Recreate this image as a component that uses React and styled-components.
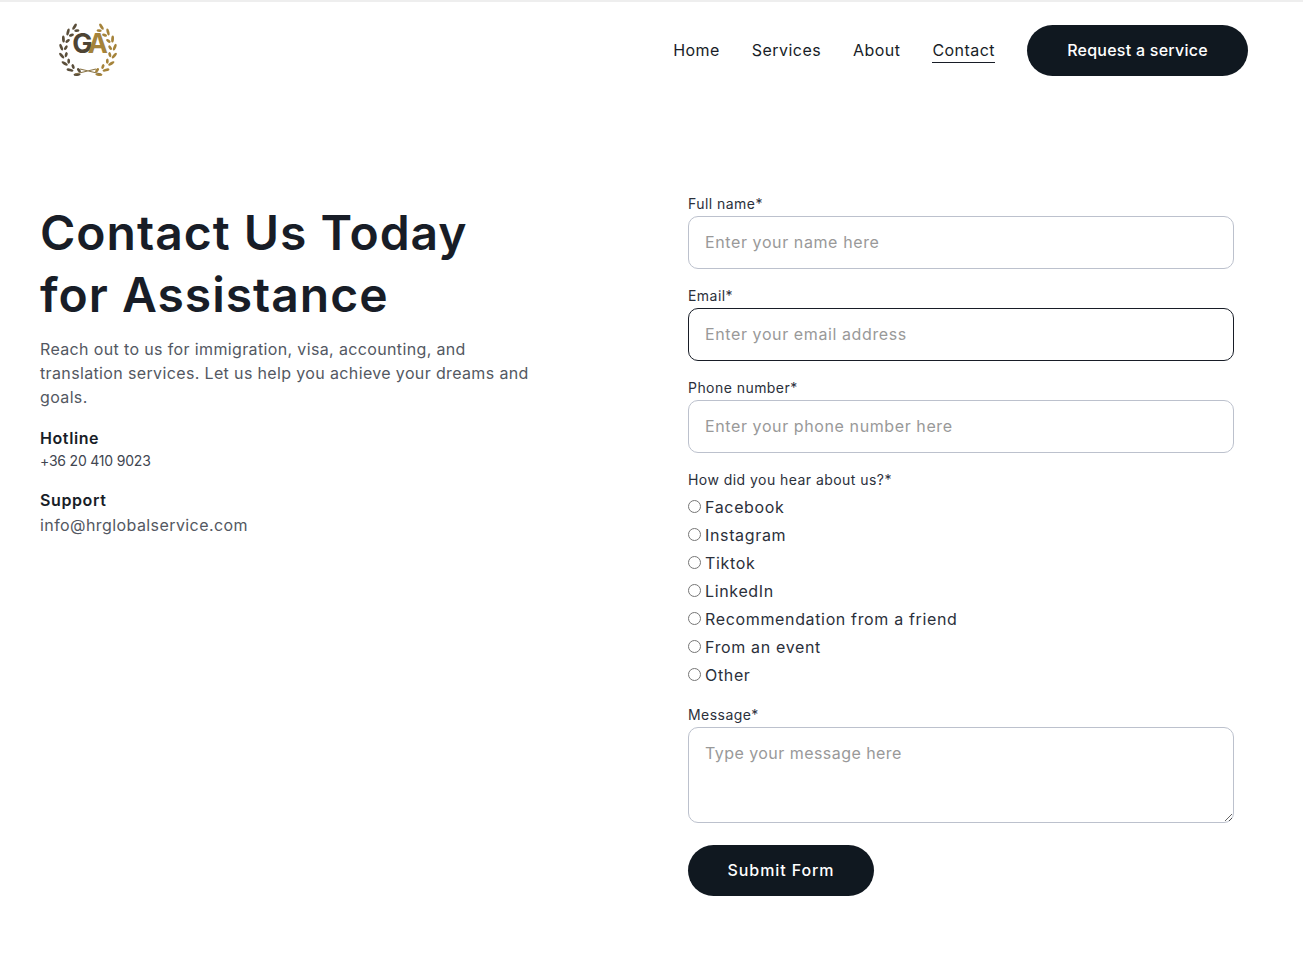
import React from 'react'
import styled, { createGlobalStyle } from 'styled-components'

const FONT = `Inter, "Open Sans", "Liberation Sans", sans-serif`

const GlobalStyle = createGlobalStyle`
  html, body {
    margin: 0;
    padding: 0;
    background: #fff;
    font-family: ${FONT};
  }
  * { box-sizing: border-box; }
`

const navLinks = ['Home', 'Services', 'About', 'Contact']
const sources = ['Facebook', 'Instagram', 'Tiktok', 'LinkedIn', 'Recommendation from a friend', 'From an event', 'Other']

// pairs of leaves along the left wreath branch, from the stem at the bottom up to the tip
const leaves = []
for (let i = 0; i < 8; i++) {
  const a = (114 + i * 18) * (Math.PI / 180)
  const x = 30 + 24.5 * Math.cos(a)
  const y = 27 + 24.5 * Math.sin(a)
  const tangent = (a * 180) / Math.PI
  leaves.push({ x: x + 2.4 * Math.cos(a), y: y + 2.4 * Math.sin(a), r: tangent - 28, ry: 3.5 })
  leaves.push({ x: x - 2.2 * Math.cos(a), y: y - 2.2 * Math.sin(a), r: tangent + 28, ry: 2.6 })
}

const Branch = ({ color }) => (
  <g fill={color}>
    {leaves.map((l, i) => (
      <ellipse key={i} cx={l.x} cy={l.y} rx="1.4" ry={l.ry} transform={`rotate(${l.r} ${l.x} ${l.y})`} />
    ))}
  </g>
)

const Logo = () => (
  <svg width="60" height="54" viewBox="0 0 60 54">
    <Branch color="#5a4e3a" />
    <g transform="translate(60 0) scale(-1 1)">
      <Branch color="#a5833a" />
    </g>
    <path d="M22 46 L43 51 M38 46 L17 51" stroke="#8a7548" strokeWidth="1.1" fill="none" />
    <text x="30" y="30" textAnchor="middle" fontFamily="Inter, sans-serif" fontWeight="700" fontSize="27" letterSpacing="-4">
      <tspan fill="#4e4434">G</tspan>
      <tspan fill="#a5833a">A</tspan>
    </text>
  </svg>
)

export default function App() {
  return (
    <Page>
      <GlobalStyle />
      <Header>
        <LogoBox><Logo /></LogoBox>
        <Nav>
          {navLinks.map((link) => (
            <NavLink key={link} href="#" $active={link === 'Contact'}>{link}</NavLink>
          ))}
          <PillButton $wide>Request a service</PillButton>
        </Nav>
      </Header>
      <Main>
        <Intro>
          <Title>Contact Us Today<br />for Assistance</Title>
          <Lead>Reach out to us for immigration, visa, accounting, and translation services. Let us help you achieve your dreams and goals.</Lead>
          <ContactTitle>Hotline</ContactTitle>
          <Phone>+36 20 410 9023</Phone>
          <ContactTitle $support>Support</ContactTitle>
          <Mail>info@hrglobalservice.com</Mail>
        </Intro>
        <Form onSubmit={(e) => e.preventDefault()}>
          <FieldLabel>Full name*</FieldLabel>
          <TextInput placeholder="Enter your name here" />
          <FieldLabel>Email*</FieldLabel>
          <TextInput $focused placeholder="Enter your email address" />
          <FieldLabel>Phone number*</FieldLabel>
          <TextInput placeholder="Enter your phone number here" />
          <FieldLabel>How did you hear about us?*</FieldLabel>
          <RadioList>
            {sources.map((s) => (
              <RadioRow key={s}>
                <Radio type="radio" name="source" />
                {s}
              </RadioRow>
            ))}
          </RadioList>
          <FieldLabel>Message*</FieldLabel>
          <MessageInput placeholder="Type your message here" />
          <PillButton type="submit">Submit Form</PillButton>
        </Form>
      </Main>
    </Page>
  )
}

const Page = styled.div`
  min-height: 955px;
  border-top: 2px solid #eeeeee;
  color: #181d27;
`

const Header = styled.header`
  display: flex;
  justify-content: space-between;
  align-items: center;
  height: 96px;
  padding: 0 55px 0 58px;
`

const LogoBox = styled.div`
  display: flex;
`

const Nav = styled.nav`
  display: flex;
  align-items: center;
  gap: 32px;
`

const NavLink = styled.a`
  font-size: 16px;
  line-height: 24px;
  letter-spacing: 0.45px;
  color: #181d27;
  text-decoration: none;
  border-bottom: 1px solid ${(p) => (p.$active ? '#181d27' : 'transparent')};
`

const PillButton = styled.button`
  display: block;
  width: ${(p) => (p.$wide ? '221px' : '186px')};
  height: 51px;
  border: none;
  border-radius: 26px;
  background: #101820;
  color: #fff;
  font-family: ${FONT};
  font-size: 16px;
  font-weight: 500;
  letter-spacing: ${(p) => (p.$wide ? '0.25px' : '0.9px')};
  padding: ${(p) => (p.$wide ? '0' : '0 0 1px')};
`

const Main = styled.main`
  display: grid;
  grid-template-columns: 648px 546px;
  padding: 96px 0 0 40px;
`

const Intro = styled.section`
  padding-top: 8px;
`

const Title = styled.h1`
  margin: 0;
  font-size: 48px;
  line-height: 62px;
  font-weight: 600;
  letter-spacing: 1px;
  color: #181d27;
`

const Lead = styled.p`
  width: 500px;
  margin: 11px 0 0;
  font-size: 16px;
  line-height: 24px;
  letter-spacing: 0.36px;
  color: #535862;
`

const ContactTitle = styled.h3`
  margin: ${(p) => (p.$support ? '16px' : '17px')} 0 0;
  font-size: 16px;
  line-height: 24px;
  font-weight: 600;
  letter-spacing: 0.6px;
  color: #181d27;
`

const Phone = styled.div`
  font-size: 14px;
  line-height: 22px;
  letter-spacing: -0.2px;
  color: #414651;
`

const Mail = styled.div`
  margin-top: 1px;
  font-size: 16px;
  line-height: 24px;
  letter-spacing: 0.42px;
  color: #535862;
`

const Form = styled.form`
  display: flex;
  flex-direction: column;
  align-items: flex-start;
`

const FieldLabel = styled.label`
  display: block;
  margin-bottom: 2px;
  font-size: 14px;
  line-height: 20px;
  letter-spacing: 0.45px;
  color: #2b303b;
`

const TextInput = styled.input`
  display: block;
  width: 100%;
  height: 53px;
  margin-bottom: 17px;
  padding: 0 16px 2px;
  border: 1px solid ${(p) => (p.$focused ? '#181d27' : '#bcc1cd')};
  border-radius: 10px;
  outline: none;
  font-family: ${FONT};
  font-size: 16px;
  letter-spacing: 0.6px;
  color: #181d27;

  &::placeholder {
    color: #999999;
    opacity: 1;
  }
`

const RadioList = styled.div`
  display: flex;
  flex-direction: column;
  margin: 1px 0 16px;
`

const RadioRow = styled.label`
  display: flex;
  align-items: center;
  gap: 4px;
  height: 28px;
  font-size: 16px;
  letter-spacing: 0.65px;
  color: #2b303b;
`

const Radio = styled.input`
  width: 13px;
  height: 13px;
  margin: 0 0 1px;
`

const MessageInput = styled.textarea`
  display: block;
  width: 100%;
  height: 96px;
  margin-bottom: 22px;
  padding: 14px 16px;
  border: 1px solid #bcc1cd;
  border-radius: 10px;
  outline: none;
  font-family: ${FONT};
  font-size: 16px;
  line-height: 22px;
  letter-spacing: 0.45px;

  &::placeholder {
    color: #999999;
    opacity: 1;
  }
`
